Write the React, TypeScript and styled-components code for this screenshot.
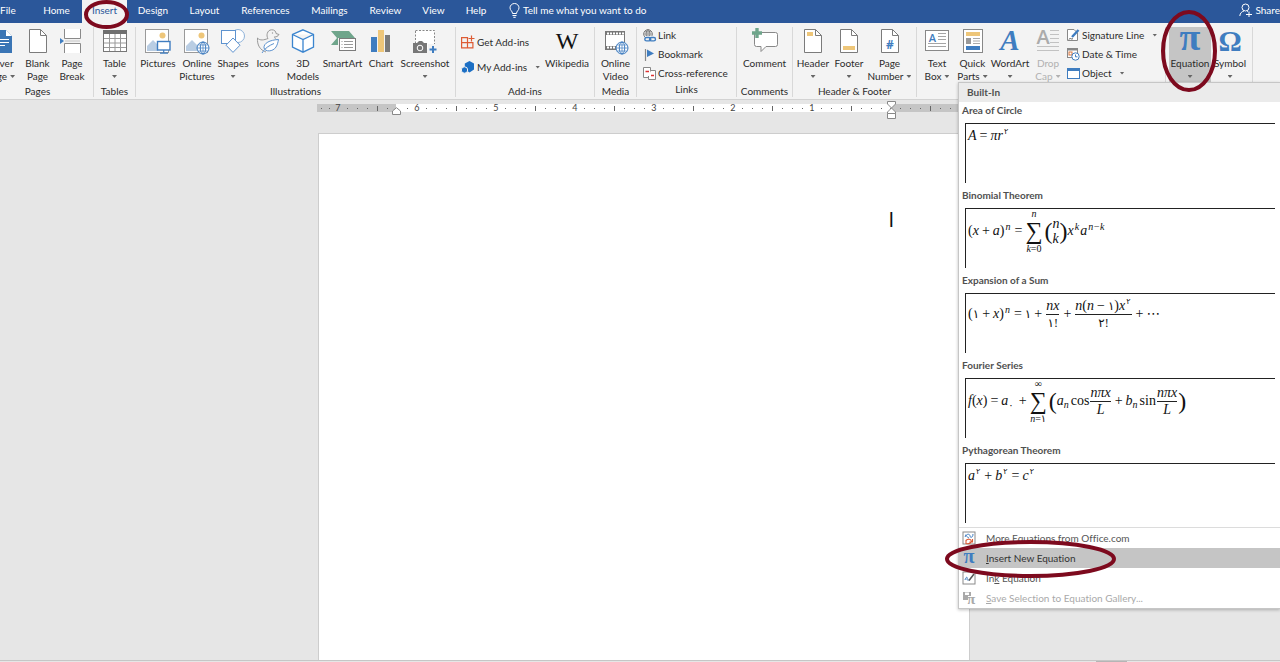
import React from "react";
import styled, { createGlobalStyle, css } from "styled-components";

const UI_FONT = 'Lato, "Open Sans", sans-serif';
const MATH_FONT = '"Liberation Serif", "DejaVu Sans", serif';
const BLUE = "#3f7dc0";
const GRAY = "#7b7b7b";
const GOLD = "#eec679";
const GREEN = "#6fa58b";
const RING = "#7d0a1e";

const GlobalStyle = createGlobalStyle`
  *, *::before, *::after { box-sizing: border-box; }
  body { margin: 0; background: #e6e6e6; font-family: ${UI_FONT}; font-size: 10px; font-variant-ligatures: none; color: #2b2b2b; }
  button { font: inherit; font-variant-ligatures: none; color: inherit; border: 0; padding: 0; background: none; cursor: default; }
  svg { display: block; flex: none; }
`;

const Shell = styled.div`
  min-height: 100vh;
  display: flex;
  flex-direction: column;
  overflow: hidden;
  position: relative;
`;

/* ---------- title / tab bar ---------- */
const TabBar = styled.nav`
  display: flex;
  align-items: stretch;
  height: 23px;
  background: #2b579a;
  color: #fff;
`;

const Tab = styled.button<{ $w: number; $active?: boolean; $first?: boolean }>`
  position: relative;
  width: ${(p) => p.$w}px;
  line-height: 20px;
  padding-bottom: 3px;
  text-align: ${(p) => (p.$first ? "left" : "center")};
  white-space: nowrap;
  ${(p) =>
    p.$active &&
    css`
      background: #f3f3f3;
      color: #2b579a;
    `}
`;

const BarAction = styled.button<{ $end?: boolean }>`
  display: flex;
  align-items: center;
  gap: 3px;
  margin-left: ${(p) => (p.$end ? "auto" : "11px")};
  padding-bottom: 3px;
  white-space: nowrap;
`;

/* Hand-drawn style highlight rings laid over the controls. */
const Ring = styled.svg<{ $l: number; $t: number }>`
  position: absolute;
  left: ${(p) => p.$l}px;
  top: ${(p) => p.$t}px;
  z-index: 20;
  pointer-events: none;
  overflow: visible;
`;

function Highlight({ w, h, l, t }: { w: number; h: number; l: number; t: number }) {
  return (
    <Ring $l={l} $t={t} width={w} height={h} viewBox={`0 0 ${w} ${h}`} aria-hidden="true">
      <ellipse cx={w / 2} cy={h / 2} rx={w / 2 - 2} ry={h / 2 - 2} fill="none" stroke={RING} strokeWidth="4" />
    </Ring>
  );
}

/* ---------- ribbon ---------- */
const Ribbon = styled.div`
  display: flex;
  height: 77px;
  padding-top: 4px;
  margin-left: -18px;
  background: #f3f3f3;
  border-bottom: 1px solid #d2d2d2;
`;

const GroupBox = styled.section<{ $w: number }>`
  display: flex;
  flex-direction: column;
  flex: none;
  width: ${(p) => p.$w}px;
  height: 70px;
  border-right: 1px solid #d8d8d8;
`;

const GroupBody = styled.div<{ $pad?: number }>`
  display: flex;
  height: 58px;
  padding-left: ${(p) => p.$pad ?? 0}px;
`;

const GroupLabel = styled.div`
  line-height: 16px;
  text-align: center;
  white-space: nowrap;
`;

const Tool = styled.button<{ $w: number; $pressed?: boolean; $off?: boolean }>`
  position: relative;
  display: flex;
  flex-direction: column;
  align-items: center;
  flex: none;
  width: ${(p) => p.$w}px;
  height: 56px;
  padding-top: 2px;
  line-height: 13px;
  white-space: nowrap;
  background: ${(p) => (p.$pressed ? "#c5c5c5" : "transparent")};
  color: ${(p) => (p.$off ? "#b1b1b1" : "inherit")};
  svg:first-child { margin-bottom: 4px; }
`;

const Line = styled.span`
  display: flex;
  align-items: center;
  gap: 3px;
  height: 13px;
`;

const Caret = styled.i<{ $off?: boolean; $gap?: number }>`
  width: 5px;
  height: 3px;
  margin-left: ${(p) => p.$gap ?? 0}px;
  background: ${(p) => (p.$off ? "#b1b1b1" : "#666")};
  clip-path: polygon(0 0, 100% 0, 50% 100%);
`;

const Stack = styled.div<{ $w: number; $loose?: boolean }>`
  display: flex;
  flex-direction: column;
  flex: none;
  width: ${(p) => p.$w}px;
  gap: ${(p) => (p.$loose ? 9 : 3)}px;
  padding-top: ${(p) => (p.$loose ? 7 : 0)}px;
`;

const SmallTool = styled.button`
  display: flex;
  align-items: center;
  gap: 2px;
  height: 16px;
  white-space: nowrap;
`;

type ToolProps = {
  icon: React.ReactNode;
  w: number;
  a: string;
  b?: string;
  caret?: boolean;
  pressed?: boolean;
  off?: boolean;
  children?: React.ReactNode;
};

function BigTool({ icon, w, a, b, caret, pressed, off, children }: ToolProps) {
  return (
    <Tool $w={w} $pressed={pressed} $off={off} disabled={off} aria-pressed={pressed}>
      {icon}
      <Line>{a}</Line>
      {(b || caret) && (
        <Line>
          {b}
          {caret && <Caret $off={off} />}
        </Line>
      )}
      {children}
    </Tool>
  );
}

function Group({ w, label, pad, children }: { w: number; label?: string; pad?: number; children: React.ReactNode }) {
  return (
    <GroupBox $w={w} aria-label={label}>
      <GroupBody $pad={pad}>{children}</GroupBody>
      {label && <GroupLabel>{label}</GroupLabel>}
    </GroupBox>
  );
}

/* ---------- icons ---------- */
function Icon({ s = 24, box = 24, children }: { s?: number; box?: number; children: React.ReactNode }) {
  return (
    <svg width={s} height={s} viewBox={`0 0 ${box} ${box}`} fill="none" overflow="visible" aria-hidden="true">
      {children}
    </svg>
  );
}

const Sheet = ({ children }: { children?: React.ReactNode }) => (
  <Icon>
    <path d="M3.5 .5H14.5L20.5 6.5V23.5H3.5Z" fill="#fff" stroke={GRAY} />
    <path d="M14.5 .5V6.5H20.5" stroke={GRAY} />
    {children}
  </Icon>
);

const CoverIcon = () => (
  <Icon>
    <path d="M2 1H17L23 7V24H2Z" fill="#3a75b5" />
    <path d="M17 1V7H23" fill="#fff" />
    <path d="M8 10.5H20M8 13.5H20M8 16.5H16" stroke="#fff" />
  </Icon>
);

const BreakIcon = () => (
  <Icon>
    <path d="M4.5 0V9.5H20.5V0" fill="#fff" stroke="#8a8a8a" />
    <path d="M4.5 24V14.5H20.5V24" fill="#fff" stroke="#8a8a8a" />
    <path d="M5 12H20" stroke="#c4c4c4" />
    <path d="M0 9L4 12L0 15Z" fill={BLUE} />
  </Icon>
);

const TableIcon = () => (
  <Icon>
    <rect x=".5" y="1.5" width="23" height="21" fill="#fff" stroke="#777" />
    <rect x="0" y="1" width="24" height="4" fill="#6f6f6f" />
    <path d="M1 9.5H23M1 14H23M1 18.5H23M6.5 5V22M12 5V22M17.5 5V22" stroke="#9a9a9a" />
  </Icon>
);

const Photo = () => (
  <>
    <rect x=".5" y=".5" width="23" height="23" fill="#fff" stroke="#9a9a9a" />
    <path d="M2 22V17L8 11L13 16V22Z" fill="#b9cde3" />
    <circle cx="17.5" cy="6.5" r="3" fill={GOLD} />
  </>
);

const Globe = ({ x, y, r, color = BLUE }: { x: number; y: number; r: number; color?: string }) => (
  <g stroke={color}>
    <circle cx={x} cy={y} r={r} fill="#fff" />
    <ellipse cx={x} cy={y} rx={r / 2.2} ry={r} />
    <path d={`M${x - r} ${y}H${x + r}M${x - r * 0.85} ${y - r / 2}H${x + r * 0.85}M${x - r * 0.85} ${y + r / 2}H${x + r * 0.85}M${x} ${y - r}V${y + r}`} strokeWidth=".7" />
  </g>
);

const PictureIcon = () => (
  <svg width="26" height="24" viewBox="0 0 26 24" fill="none" overflow="visible" aria-hidden="true">
    <Photo />
    <rect x="12.500" y="12.500" width="12.500" height="8.500" fill="#fff" stroke={BLUE} strokeWidth="1.400" />
    <path d="M18.700 21V23.900M15 24.200H23" stroke={BLUE} strokeWidth="1.200" />
  </svg>
);

const OnlinePictureIcon = () => (
  <svg width="26" height="24" viewBox="0 0 26 24" fill="none" overflow="visible" aria-hidden="true">
    <Photo />
    <Globe x={19} y={19} r={6} />
  </svg>
);

const ShapesIcon = () => (
  <Icon>
    <circle cx="17" cy="7" r="6.5" stroke="#8fb3da" fill="#fff" />
    <rect x=".5" y="1.5" width="14" height="13" fill="#fff" stroke="#5e93cf" />
    <path d="M12 9L19 16.2L12 23.4L5 16.2Z" fill="#fff" stroke="#5e93cf" />
  </Icon>
);

const DuckIcon = () => (
  <Icon>
    <path d="M10 23C4 21 1 16 1.5 9C4 12 8 11 12 9.500C10 7 11 1 15.5 .8C18.500 .6 20 2.500 20 4.500L23 5.500C22 7.500 20 8 18.500 7.800C18.500 9 20 10 20.500 11" stroke="#999" />
    <circle cx="16.500" cy="4" r=".7" fill="#999" />
    <path d="M22.500 10.500C14 11 7.500 14 8 19C9 23 17 23 20 18C21.500 15.500 22 13 22.500 10.500ZM6 24C9 19 13 16.500 18 14.500" fill="#fff" stroke="#5e93cf" />
  </Icon>
);

const CubeIcon = () => (
  <Icon>
    <path d="M12 .8L22.500 5.500V18L12 23.200L1.500 18V5.500ZM1.500 5.500L12 10.500L22.500 5.500M12 10.500V23" fill="#fff" stroke="#3b85cf" strokeWidth="1.300" />
  </Icon>
);

const SmartArtIcon = () => (
  <svg width="26" height="24" viewBox="0 0 26 24" fill="none" aria-hidden="true">
    <path d="M1 2H19L25 9H8V16H1L7 9Z" fill={GREEN} />
    <rect x="9.500" y="9.500" width="16" height="12" fill="#fff" stroke="#7b7b7b" />
    <path d="M14 12.500H23M14 15.500H23M14 18.500H23M11.500 12.500H12.500M11.500 15.500H12.500M11.500 18.500H12.500" stroke="#999" />
  </svg>
);

const ChartIcon = () => (
  <Icon>
    <rect x="2" y="8" width="6" height="15" fill={BLUE} />
    <rect x="9" y="1" width="6" height="22" fill={GOLD} />
    <rect x="16" y="6" width="5" height="17" fill="#7a7a7a" />
  </Icon>
);

const ScreenshotIcon = () => (
  <Icon>
    <rect x="2.500" y="1.500" width="19" height="19" fill="#fff" stroke="#888" strokeDasharray="2 1.500" />
    <path d="M0 14H4L6 12H9L11 14H14V24H0Z" fill="#777" />
    <circle cx="7" cy="19" r="2.800" fill="#777" stroke="#fff" />
    <rect x="15" y="15" width="9" height="9" fill="#f3f3f3" />
    <path d="M20 17V24M16.500 20.500H23.500" stroke={BLUE} strokeWidth="2" />
  </Icon>
);

const GetAddinsIcon = () => (
  <Icon s={14} box={14}>
    <path d="M.6 2.600H6.500V12.900H.6ZM.6 7.600H11.900V12.900H6.500M6.500 7.600V2.600" stroke="#dd5b34" strokeWidth="1.200" />
    <path d="M10.500 .5V6.500M7.500 3.500H13.500" stroke="#dd5b34" strokeWidth="1.200" />
  </Icon>
);

const MyAddinsIcon = () => (
  <Icon s={14} box={14}>
    <path d="M8.500 1L13 3.500V9.500L8.500 12.500L3.800 9V3.500Z" fill="#1c6fc4" />
    <circle cx="3.500" cy="10" r="3.200" fill="#1c6fc4" stroke="#f3f3f3" />
  </Icon>
);

const GlyphIcon = ({
  ch,
  size,
  color,
  font = "Liberation Serif",
  bold,
  italic,
  y,
}: {
  ch: string;
  size: number;
  color: string;
  font?: string;
  bold?: boolean;
  italic?: boolean;
  y: number;
}) => (
  <Icon>
    <text
      x="12"
      y={y}
      textAnchor="middle"
      fontFamily={`"${font}", serif`}
      fontSize={size}
      fontWeight={bold ? 700 : 400}
      fontStyle={italic ? "italic" : "normal"}
      fill={color}
    >
      {ch}
    </text>
  </Icon>
);

const VideoIcon = () => (
  <Icon>
    <rect x="1.500" y="2.500" width="19" height="18" fill="#fff" stroke="#777" />
    <path d="M2 4.500H20M2 18.500H13" stroke="#777" strokeWidth="3" />
    <path d="M3 4.500H20M3 18.500H13" stroke="#fff" strokeWidth="2" strokeDasharray="2 1" />
    <Globe x={18} y={19} r={6} />
  </Icon>
);

const LinkIcon = () => (
  <Icon s={13} box={13}>
    <Globe x={5} y={5} r={4.3} color="#777" />
    <rect x="2" y="7" width="11" height="6" fill="#f3f3f3" />
    <rect x="1.800" y="8.500" width="6" height="3.400" rx="1.700" stroke={BLUE} strokeWidth="1.400" />
    <rect x="6.500" y="8.500" width="6" height="3.400" rx="1.700" stroke={BLUE} strokeWidth="1.400" />
  </Icon>
);

const BookmarkIcon = () => (
  <Icon s={13} box={13}>
    <path d="M2.500 1V13" stroke="#888" strokeWidth="1.200" />
    <path d="M4 1.500L11 5.500L4 9Z" fill={BLUE} />
  </Icon>
);

const CrossRefIcon = () => (
  <Icon s={13} box={13}>
    <path d="M.5 .5H7.500V10.500H.5Z" fill="#fff" stroke="#888" />
    <path d="M8 3.500H12.500V12.500H5.500V9" fill="#fff" stroke="#888" />
    <path d="M2.500 4.500H6" stroke="#d33" strokeWidth="1.500" />
    <path d="M8 8.500H11" stroke="#d33" strokeWidth="1.500" />
  </Icon>
);

const CommentIcon = () => (
  <svg width="26" height="24" viewBox="0 0 26 24" fill="none" overflow="visible" aria-hidden="true">
    <path d="M3.500 3.500H23.500Q25.500 3.500 25.500 5.500V15.500Q25.500 17.500 23.500 17.500H14L9 22.500V17.500H4.500Q2.500 17.500 2.500 15.500V4Z" fill="#fff" stroke="#888" />
    <path d="M5 -1V9M0 4H10" stroke={GREEN} strokeWidth="3.400" />
  </svg>
);

const TextBoxIcon = () => (
  <Icon>
    <rect x=".5" y="1.500" width="23" height="20" fill="#fff" stroke="#888" />
    <text x="7.500" y="13" textAnchor="middle" fontFamily='"Open Sans", sans-serif' fontSize="11" fontWeight="600" fill={BLUE}>
      A
    </text>
    <path d="M13 4.500H21M13 7.500H21M13 10.500H21M3 14.500H21M3 17.500H21" stroke="#a5a5a5" />
  </Icon>
);

const QuickPartsIcon = () => (
  <Icon>
    <rect x="2.500" y=".5" width="19" height="23" fill="#fff" stroke="#888" />
    <rect x="5" y="3" width="14" height="4" fill={GOLD} />
    <rect x="5" y="9" width="5" height="6" fill="#999" />
    <path d="M12 9.500H19M12 12H19M12 14.500H19" stroke="#aaa" />
    <rect x="5" y="17" width="14" height="4" fill={BLUE} />
  </Icon>
);

const DropCapIcon = () => (
  <Icon>
    <text x="7" y="15" textAnchor="middle" fontFamily='"Open Sans", sans-serif' fontSize="20" fontWeight="600" fill="#ababab">
      A
    </text>
    <path d="M14 1.500H23M14 5.500H23M14 9.500H23M14 13.500H23M1 17.500H23M1 21.500H23" stroke="#c2c2c2" />
  </Icon>
);

const SignatureIcon = () => (
  <Icon s={14} box={14}>
    <path d="M1.500 1.500H8L11.500 5V12.500H1.500Z" fill="#fff" stroke="#888" />
    <path d="M6 9L12.500 2" stroke={BLUE} strokeWidth="2.400" />
    <path d="M3 11.500C4 9 5 12 7 10.500" stroke="#555" />
  </Icon>
);

const DateIcon = () => (
  <Icon s={14} box={14}>
    <rect x="1.500" y="1.500" width="10" height="9" fill="#fff" stroke="#888" />
    <path d="M1.500 2.500H11.500" stroke="#888" strokeWidth="2" />
    <rect x="3" y="5" width="3" height="3" stroke="#d9763f" />
    <circle cx="9.500" cy="9.500" r="3.700" fill="#fff" stroke={BLUE} />
    <path d="M9.500 7.500V9.800H11.500" stroke={BLUE} />
  </Icon>
);

const ObjectIcon = () => (
  <Icon s={14} box={14}>
    <rect x="1.500" y="2.500" width="12" height="10" fill="#fff" stroke={BLUE} />
    <rect x="1" y="2" width="13" height="3" fill={BLUE} />
  </Icon>
);

const MoreEqIcon = () => (
  <Icon s={14} box={14}>
    <rect x="1" y="1" width="12" height="12" fill="#fff" stroke="#8a8a8a" />
    <path d="M3 6C5 2 8 3 8 5C8 7 11 7 11 3M3 4C5 4 5 7 7 7" stroke={BLUE} />
    <path d="M4 9.500C6 7.500 9 8 9.500 10.500M10.500 8V11H7.500M4 9V12.500C6 13 8 12.500 9 11.500" stroke="#dd5b34" strokeWidth="1.100" />
  </Icon>
);

const InkIcon = () => (
  <Icon s={14} box={14}>
    <rect x="1" y="1" width="12" height="12" fill="#fff" stroke="#8a8a8a" />
    <path d="M3 9C4 5 6 6 5 8C5 10 7 9 8 8" stroke={BLUE} />
    <path d="M7 9.500L12 3" stroke="#555" strokeWidth="1.500" />
  </Icon>
);

const SaveIcon = () => (
  <Icon s={14} box={14}>
    <path d="M1 1H9V5H6V9H1Z" fill="#a9a9a9" />
    <path d="M3 1.500H7V4H3Z" fill="#fff" />
    <text x="9" y="13" textAnchor="middle" fontFamily='"Liberation Serif", serif' fontSize="15" fontWeight="700" fill="#a9a9a9">
      π
    </text>
  </Icon>
);

const PiMenuIcon = () => (
  <Icon s={14} box={14}>
    <text x="7" y="12" textAnchor="middle" fontFamily='"Liberation Serif", serif' fontSize="20" fontWeight="700" fill={BLUE}>
      π
    </text>
  </Icon>
);

/* ---------- workspace ---------- */
const Workspace = styled.main`
  flex: 1;
  display: flex;
  flex-direction: column;
  align-items: center;
  padding: 4px 0 0 8px;
  border-bottom: 1px solid #c6c6c6;
`;

const Ruler = styled.div`
  position: relative;
  width: 654px;
  height: 8px;
  background: linear-gradient(to right, #c5c5c5 79px, #fff 79px, #fff 574px, #c5c5c5 574px);
  color: #444;
`;

const Scale = styled.div`
  display: flex;
  justify-content: flex-end;
  padding-right: 6px;
`;

const Span = styled.div<{ $w: number; $slots: number }>`
  display: grid;
  grid-template-columns: repeat(${(p) => p.$slots}, 1fr);
  flex: none;
  width: ${(p) => p.$w}px;
  align-items: center;
  justify-items: center;
  line-height: 8px;
  font-size: 9px;
`;

const Tick = styled.i<{ $tall?: boolean }>`
  width: 1px;
  height: ${(p) => (p.$tall ? 5 : 1)}px;
  background: #666;
`;

const Marker = styled.svg<{ $x: number; $y: number }>`
  position: absolute;
  left: ${(p) => p.$x}px;
  top: ${(p) => p.$y}px;
`;

const Page = styled.article`
  flex: 1;
  width: 652px;
  margin-top: 21px;
  padding: 76px 75px 0;
  background: #fff;
  border: 1px solid #cdcdcd;
  border-bottom: 0;
  direction: rtl;
  font-family: "Liberation Serif", "DejaVu Sans", serif;
  font-size: 20px;
  line-height: 20px;
  color: #111;
`;

const Paragraph = styled.p`
  margin: 0;
`;

const StatusBar = styled.footer`
  display: flex;
  justify-content: flex-end;
  height: 1px;
  padding-right: 153px;
  background: #e6e6e6;
`;

const StatusThumb = styled.div`
  width: 31px;
  background: #b5b5b5;
`;

/* ---------- equation gallery ---------- */
const Gallery = styled.div`
  position: absolute;
  top: 82px;
  right: 0;
  z-index: 10;
  width: 322px;
  background: #fff;
  border: 1px solid #c6c6c6;
  border-right: 0;
  box-shadow: 0 1px 3px rgba(0, 0, 0, 0.25);
  color: #505050;
`;

const GalleryHead = styled.h2`
  margin: 0;
  padding-left: 8px;
  height: 19px;
  line-height: 19px;
  font-size: 10px;
  background: #ebebeb;
`;

const GalleryItem = styled.section`
  height: 85px;
  padding: 0 5px 0 3px;
`;

const GalleryTitle = styled.h3`
  margin: 0 0 4px;
  font-size: 10px;
  line-height: 17px;
`;

const Preview = styled.div`
  height: 60px;
  margin-left: 3px;
  padding-left: 2px;
  border-top: 1px solid #222;
  border-left: 1px solid #222;
`;

const Eq = styled.div<{ $h: number }>`
  display: flex;
  align-items: center;
  height: ${(p) => p.$h}px;
  font-family: ${MATH_FONT};
  font-size: 14px;
  line-height: 16px;
  font-style: italic;
  color: #111;
  white-space: nowrap;
`;

const Piece = styled.span`
  direction: ltr;
  unicode-bidi: isolate;
`;

const Up = styled.span`
  font-style: normal;
`;

const Digit = styled(Piece)`
  font-style: normal;
  font-size: 12px;
`;

const Op = styled(Up)`
  margin: 0 3px;
`;

const Sup = styled.span<{ $digit?: boolean }>`
  margin: 0 1px;
  font-size: ${(p) => (p.$digit ? 8 : 10)}px;
  font-style: ${(p) => (p.$digit ? "normal" : "inherit")};
  line-height: 8px;
  vertical-align: ${(p) => (p.$digit ? 6 : 5)}px;
`;

const Sub = styled.span<{ $digit?: boolean }>`
  margin-right: 2px;
  font-size: 10px;
  font-style: ${(p) => (p.$digit ? "normal" : "inherit")};
  line-height: 8px;
  vertical-align: -3px;
`;

const Col = styled.span`
  display: flex;
  flex-direction: column;
  align-items: center;
  margin-right: 2px;
  font-size: 10px;
  line-height: 9px;
`;

const Sigma = styled.span`
  font-size: 24px;
  line-height: 26px;
  font-style: normal;
`;

const Frac = styled.span`
  display: flex;
  flex-direction: column;
  align-items: center;
  margin: 0 1px;
  line-height: 16px;
  & > span:first-child {
    border-bottom: 1px solid #222;
    align-self: stretch;
    text-align: center;
  }
`;

const Paren = styled.span`
  font-size: 24px;
  line-height: 26px;
  font-style: normal;
`;

const Pair = styled.span`
  display: flex;
  flex-direction: column;
  line-height: 15px;
`;

const Menu = styled.div`
  border-top: 1px solid #dcdcdc;
`;

const MenuItem = styled.button<{ $on?: boolean; $off?: boolean }>`
  position: relative;
  display: flex;
  align-items: center;
  gap: 10px;
  width: 100%;
  height: 20px;
  padding-left: 3px;
  background: ${(p) => (p.$on ? "#c5c5c5" : "transparent")};
  color: ${(p) => (p.$off ? "#a9a9a9" : p.$on ? "#333" : "#555")};
`;

const inches = ["7", "6", "5", "4", "3", "2", "1", ""];

export default function App() {
  return (
    <Shell>
      <GlobalStyle />
      <TabBar aria-label="Ribbon tabs">
        <Tab $w={31} $first>File</Tab>
        <Tab $w={51}>Home</Tab>
        <Tab $w={45} $active>
          Insert
          <Highlight w={45} h={29} l={2} t={0} />
        </Tab>
        <Tab $w={52}>Design</Tab>
        <Tab $w={51}>Layout</Tab>
        <Tab $w={71}>References</Tab>
        <Tab $w={57}>Mailings</Tab>
        <Tab $w={55}>Review</Tab>
        <Tab $w={41}>View</Tab>
        <Tab $w={44}>Help</Tab>
        <BarAction>
          <svg width="11" height="15" viewBox="0 0 11 15" fill="none" stroke="#fff" aria-hidden="true">
            <path d="M3.500 10.500C3.500 8 1 7.500 1 4.800A4.500 4.300 0 0 1 10 4.800C10 7.500 7.500 8 7.500 10.500ZM3.500 12.500H7.500M4.300 14.300H6.700" />
          </svg>
          Tell me what you want to do
        </BarAction>
        <BarAction $end>
          <svg width="13" height="14" viewBox="0 0 13 14" fill="none" stroke="#fff" aria-hidden="true">
            <circle cx="6.500" cy="4.500" r="3.500" />
            <path d="M.8 13C1 10 3 8.500 5 8M8 8L9 8.500M7 11.500H13M10 8.500V14" />
          </svg>
          Share
        </BarAction>
      </TabBar>

      <Ribbon>
        <Group w={112} label="Pages">
          <BigTool w={37} icon={<CoverIcon />} a="Cover" b="Page" caret />
          <BigTool w={37} icon={<Sheet />} a="Blank" b="Page" />
          <BigTool w={32} icon={<BreakIcon />} a="Page" b="Break" />
        </Group>
        <Group w={42} label="Tables">
          <BigTool w={41} icon={<TableIcon />} a="Table" caret />
        </Group>
        <Group w={320} label="Illustrations">
          <BigTool w={44} icon={<PictureIcon />} a="Pictures" />
          <BigTool w={34} icon={<OnlinePictureIcon />} a="Online" b="Pictures" />
          <BigTool w={38} icon={<ShapesIcon />} a="Shapes" caret />
          <BigTool w={32} icon={<DuckIcon />} a="Icons" />
          <BigTool w={38} icon={<CubeIcon />} a="3D" b="Models" />
          <BigTool w={41} icon={<SmartArtIcon />} a="SmartArt" />
          <BigTool w={36} icon={<ChartIcon />} a="Chart" />
          <BigTool w={52} icon={<ScreenshotIcon />} a="Screenshot" caret />
        </Group>
        <Group w={139} label="Add-ins" pad={5}>
          <Stack $w={82} $loose>
            <SmallTool><GetAddinsIcon />Get Add-ins</SmallTool>
            <SmallTool><MyAddinsIcon />My Add-ins<Caret $gap={6} /></SmallTool>
          </Stack>
          <BigTool w={48} icon={<GlyphIcon ch="W" size={24} y={20} color="#111" />} a="Wikipedia" />
        </Group>
        <Group w={42} label="Media">
          <BigTool w={41} icon={<VideoIcon />} a="Online" b="Video" />
        </Group>
        <Group w={100} label="Links" pad={6}>
          <Stack $w={90}>
            <SmallTool><LinkIcon />Link</SmallTool>
            <SmallTool><BookmarkIcon />Bookmark</SmallTool>
            <SmallTool><CrossRefIcon />Cross-reference</SmallTool>
          </Stack>
        </Group>
        <Group w={56} label="Comments">
          <BigTool w={55} icon={<CommentIcon />} a="Comment" />
        </Group>
        <Group w={124} label="Header & Footer" pad={2}>
          <BigTool
            w={36}
            icon={<Sheet><rect x="6" y="3" width="6" height="4" fill={GOLD} /></Sheet>}
            a="Header"
            caret
          />
          <BigTool
            w={36}
            icon={<Sheet><rect x="6" y="17" width="12" height="4" fill={GOLD} /></Sheet>}
            a="Footer"
            caret
          />
          <BigTool
            w={45}
            icon={
              <Sheet>
                <text x="12" y="20" textAnchor="middle" fontFamily='"Open Sans", sans-serif' fontSize="12" fontWeight="700" fill={BLUE}>#</text>
              </Sheet>
            }
            a="Page"
            b="Number"
            caret
          />
        </Group>
        <Group w={249} pad={2}>
          <BigTool w={36} icon={<TextBoxIcon />} a="Text" b="Box" caret />
          <BigTool w={35} icon={<QuickPartsIcon />} a="Quick" b="Parts" caret />
          <BigTool w={40} icon={<GlyphIcon ch="A" size={29} y={21} color={BLUE} bold italic />} a="WordArt" caret />
          <BigTool w={36} icon={<DropCapIcon />} a="Drop" b="Cap" caret off />
          <Stack $w={98}>
            <SmallTool><SignatureIcon />Signature Line<Caret $gap={6} /></SmallTool>
            <SmallTool><DateIcon />Date &amp; Time</SmallTool>
            <SmallTool><ObjectIcon />Object<Caret $gap={6} /></SmallTool>
          </Stack>
        </Group>
        <Group w={87} pad={3}>
          <BigTool w={42} icon={<GlyphIcon ch="π" size={38} y={21} color={BLUE} bold />} a="Equation" caret pressed>
            <Highlight w={56} h={82} l={-8} t={-17} />
          </BigTool>
          <BigTool w={38} icon={<GlyphIcon ch="Ω" size={29} y={22} color={BLUE} bold />} a="Symbol" caret />
        </Group>
      </Ribbon>

      <Workspace>
        <Ruler aria-label="Ruler">
          <Scale>
            <Span $w={16} $slots={2}><Tick /><Tick /></Span>
            {inches.map((n, i) => (
              <Span key={i} $w={79} $slots={8}>
                {n ? <span>{n}</span> : <Tick />}
                <Tick /><Tick /><Tick /><Tick $tall /><Tick /><Tick /><Tick />
              </Span>
            ))}
          </Scale>
          <Marker $x={75} $y={3} width="9" height="8" viewBox="0 0 9 8" aria-hidden="true">
            <path d="M.5 7.500V4L4.500 .7L8.500 4V7.500Z" fill="#fff" stroke="#888" />
          </Marker>
          <Marker $x={570} $y={-3} width="9" height="19" viewBox="0 0 9 19" aria-hidden="true">
            <path d="M.5 .5H8.500V3L4.500 7L8.500 11V12.500H.5V11L4.500 7L.5 3ZM.5 12.500H8.500V17.500H.5Z" fill="#fff" stroke="#888" />
          </Marker>
        </Ruler>
        <Page>
          <Paragraph>ا</Paragraph>
        </Page>
      </Workspace>
      <StatusBar><StatusThumb /></StatusBar>

      <Gallery aria-label="Equation gallery">
        <GalleryHead>Built-In</GalleryHead>
        <GalleryItem>
          <GalleryTitle>Area of Circle</GalleryTitle>
          <Preview>
            <Eq $h={24}>
              <Piece>A<Op>=</Op>πr<Sup $digit>٢</Sup></Piece>
            </Eq>
          </Preview>
        </GalleryItem>
        <GalleryItem>
          <GalleryTitle>Binomial Theorem</GalleryTitle>
          <Preview>
            <Eq $h={44}>
              <Piece><Up>(</Up>x<Op>+</Op>a<Up>)</Up><Sup>n</Sup><Op>=</Op></Piece>
              <Col><span>n</span><Sigma>∑</Sigma><span>k<Up>=0</Up></span></Col>
              <Paren>(</Paren>
              <Pair><span>n</span><span>k</span></Pair>
              <Paren>)</Paren>
              <Piece>x<Sup>k</Sup>a<Sup>n−k</Sup></Piece>
            </Eq>
          </Preview>
        </GalleryItem>
        <GalleryItem>
          <GalleryTitle>Expansion of a Sum</GalleryTitle>
          <Preview>
            <Eq $h={40}>
              <Piece><Up>(</Up></Piece><Digit>١</Digit>
              <Piece><Op>+</Op>x<Up>)</Up><Sup>n</Sup><Op>=</Op></Piece>
              <Digit>١</Digit><Op>+</Op>
              <Frac><span>nx</span><Digit>١!</Digit></Frac>
              <Op>+</Op>
              <Frac>
                <span>n<Up>(</Up>n<Op>−</Op><Digit>١</Digit><Up>)</Up>x<Sup $digit>٢</Sup></span>
                <Digit>٢!</Digit>
              </Frac>
              <Op>+</Op><Up>⋯</Up>
            </Eq>
          </Preview>
        </GalleryItem>
        <GalleryItem>
          <GalleryTitle>Fourier Series</GalleryTitle>
          <Preview>
            <Eq $h={44}>
              <Piece>f<Up>(</Up>x<Up>)</Up><Op>=</Op>a<Sub $digit>٠</Sub></Piece><Op>+</Op>
              <Col><Up>∞</Up><Sigma>∑</Sigma><span>n<Up>=١</Up></span></Col>
              <Paren>(</Paren>
              <Piece>a<Sub>n</Sub><Up>cos</Up></Piece>
              <Frac><span>nπx</span><span>L</span></Frac>
              <Piece><Op>+</Op>b<Sub>n</Sub><Up>sin</Up></Piece>
              <Frac><span>nπx</span><span>L</span></Frac>
              <Paren>)</Paren>
            </Eq>
          </Preview>
        </GalleryItem>
        <GalleryItem>
          <GalleryTitle>Pythagorean Theorem</GalleryTitle>
          <Preview>
            <Eq $h={24}>
              <Piece>a<Sup $digit>٢</Sup></Piece><Op>+</Op><Piece>b<Sup $digit>٢</Sup></Piece><Op>=</Op><Piece>c<Sup $digit>٢</Sup></Piece>
            </Eq>
          </Preview>
        </GalleryItem>
        <Menu>
          <MenuItem><MoreEqIcon /><span><u>M</u>ore Equations from Office.com</span></MenuItem>
          <MenuItem $on>
            <PiMenuIcon /><span><u>I</u>nsert New Equation</span>
            <Highlight w={171} h={38} l={-14} t={-8} />
          </MenuItem>
          <MenuItem><InkIcon /><span>In<u>k</u> Equation</span></MenuItem>
          <MenuItem $off disabled><SaveIcon /><span><u>S</u>ave Selection to Equation Gallery...</span></MenuItem>
        </Menu>
      </Gallery>
    </Shell>
  );
}
